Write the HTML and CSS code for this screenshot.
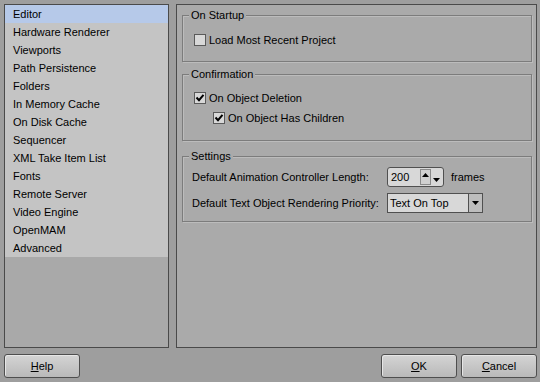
FILE: index.html
```html
<!DOCTYPE html>
<html>
<head>
<meta charset="utf-8">
<link rel="stylesheet" href="styles.css">
</head>
<body>
<div class="dialog">
  <div class="main">
    <div class="nav">
      <ul class="nav-list">
        <li class="nav-item selected">Editor</li>
        <li class="nav-item">Hardware Renderer</li>
        <li class="nav-item">Viewports</li>
        <li class="nav-item">Path Persistence</li>
        <li class="nav-item">Folders</li>
        <li class="nav-item">In Memory Cache</li>
        <li class="nav-item">On Disk Cache</li>
        <li class="nav-item">Sequencer</li>
        <li class="nav-item">XML Take Item List</li>
        <li class="nav-item">Fonts</li>
        <li class="nav-item">Remote Server</li>
        <li class="nav-item">Video Engine</li>
        <li class="nav-item">OpenMAM</li>
        <li class="nav-item">Advanced</li>
      </ul>
    </div>
    <div class="content">
      <div class="group group-startup">
        <span class="group-title">On Startup</span>
        <div class="group-body">
          <label class="check-row">
            <span class="checkbox"></span>
            <span>Load Most Recent Project</span>
          </label>
        </div>
      </div>
      <div class="group group-confirm">
        <span class="group-title">Confirmation</span>
        <div class="group-body">
          <label class="check-row">
            <span class="checkbox checked"><svg viewBox="0 0 12 12" width="12" height="12"><path d="M2.5 5.5 L5 8.2 L9.5 2.8" fill="none" stroke="#000" stroke-width="2"/></svg></span>
            <span>On Object Deletion</span>
          </label>
          <label class="check-row indent">
            <span class="checkbox checked"><svg viewBox="0 0 12 12" width="12" height="12"><path d="M2.5 5.5 L5 8.2 L9.5 2.8" fill="none" stroke="#000" stroke-width="2"/></svg></span>
            <span>On Object Has Children</span>
          </label>
        </div>
      </div>
      <div class="group group-settings">
        <span class="group-title">Settings</span>
        <div class="group-body settings-grid">
          <span class="setting-label">Default Animation Controller Length:</span>
          <div class="setting-control">
            <div class="spinner">
              <span class="spinner-value">200</span>
              <span class="spin-btn up"><svg viewBox="0 0 7 4" width="7" height="4"><path d="M0 4 L3.5 0 L7 4 Z" fill="#000"/></svg></span>
              <span class="spin-btn down"><svg viewBox="0 0 7 4" width="7" height="4"><path d="M0 0 L7 0 L3.5 4 Z" fill="#000"/></svg></span>
            </div>
            <span class="unit">frames</span>
          </div>
          <span class="setting-label">Default Text Object Rendering Priority:</span>
          <div class="setting-control">
            <div class="dropdown">
              <span class="dropdown-value">Text On Top</span>
              <span class="dropdown-arrow"><svg viewBox="0 0 7 4" width="7" height="4"><path d="M0 0 L7 0 L3.5 4 Z" fill="#000"/></svg></span>
            </div>
          </div>
        </div>
      </div>
    </div>
  </div>
  <div class="footer">
    <button class="btn"><u>H</u>elp</button>
    <div class="footer-right">
      <button class="btn"><u>O</u>K</button>
      <button class="btn"><u>C</u>ancel</button>
    </div>
  </div>
</div>
</body>
</html>
```

FILE: styles.css
```css
* { box-sizing: border-box; }
html, body {
  margin: 0;
  padding: 0;
  background: #9e9e9e;
  width: 540px;
  height: 382px;
  overflow: hidden;
}
body {
  font-family: "Liberation Sans", Arial, sans-serif;
  font-size: 11px;
  color: #000;
}
.dialog {
  padding: 4px 3px 0 4px;
}
.main {
  display: flex;
  gap: 7px;
  height: 344px;
}
.nav {
  width: 165px;
  border: 1px solid #4a4a4a;
  background: #a9a9a9;
}
.nav-list {
  list-style: none;
  margin: 0;
  padding: 0;
  background: #c4c4c4;
}
.nav-item {
  height: 18px;
  line-height: 18px;
  padding-left: 8px;
  white-space: nowrap;
}
.nav-item.selected {
  background: #b6c9e9;
}
.content {
  flex: 1;
  border: 1px solid #4a4a4a;
  background: #aaaaaa;
  padding: 10px 4px 0 5px;
}
.group {
  border: 1px solid #7c7c7c;
  box-shadow: inset 1px 1px 0 #bcbcbc, 1px 1px 0 #bcbcbc;
  padding: 0 4px 0 9px;
}
.group-title {
  display: block;
  width: fit-content;
  margin: -7px 0 0 -3px;
  padding: 0 2px;
  line-height: 13px;
  background: #aaaaaa;
}
.group-startup .group-body {
  padding: 8px 0 11px;
}
.group-confirm {
  margin-top: 12px;
}
.group-confirm .group-body {
  padding: 7px 0 12px;
}
.group-settings {
  margin-top: 15px;
}
.group-settings .group-body {
  padding: 4px 0 8px;
}
.check-row {
  display: flex;
  align-items: center;
  gap: 3px;
  height: 20px;
  padding-left: 2px;
}
.check-row.indent {
  padding-left: 21px;
}
.checkbox {
  width: 12px;
  height: 12px;
  border: 1px solid #5a5a5a;
  background: #d8d8d8;
  display: flex;
  align-items: center;
  justify-content: center;
}
.checkbox svg {
  display: block;
  flex: none;
}
.settings-grid {
  display: grid;
  grid-template-columns: 195px auto;
  row-gap: 6px;
  align-items: center;
}
.setting-label {
  white-space: nowrap;
}
.setting-control {
  display: flex;
  align-items: center;
  gap: 7px;
}
.spinner {
  width: 57px;
  height: 20px;
  border: 1px solid #505050;
  border-radius: 3px;
  background: #d8d8d8;
  display: flex;
  align-items: center;
  padding: 0 1px 0 3px;
}
.spinner-value {
  flex: 1;
}
.spin-btn {
  width: 11px;
  height: 16px;
  display: flex;
  justify-content: center;
}
.spin-btn.up {
  border: 1px solid #8a8a8a;
  background: #d0d0d0;
  align-items: flex-start;
  padding-top: 3px;
}
.spin-btn.down {
  align-items: flex-end;
  padding-bottom: 3px;
}
.dropdown {
  width: 96px;
  height: 20px;
  border: 1px solid #505050;
  background: #d8d8d8;
  display: flex;
  align-items: center;
}
.dropdown-value {
  flex: 1;
  padding-left: 2px;
}
.dropdown-arrow {
  width: 14px;
  height: 100%;
  border-left: 1px solid #505050;
  background: #bdbdbd;
  display: flex;
  align-items: center;
  justify-content: center;
}
.footer {
  display: flex;
  justify-content: space-between;
  margin-top: 6px;
}
.footer-right {
  display: flex;
  gap: 4px;
}
.btn {
  width: 76px;
  height: 24px;
  border: 1px solid #4e4e4e;
  border-radius: 3px;
  background: linear-gradient(#d4d4d4, #b9b9b9);
  box-shadow: inset 1px 1px 0 #e6e6e6;
  font-family: "Liberation Sans", Arial, sans-serif;
  font-size: 11px;
  color: #000;
  padding: 0;
}
.btn u {
  text-decoration: underline;
}
```
